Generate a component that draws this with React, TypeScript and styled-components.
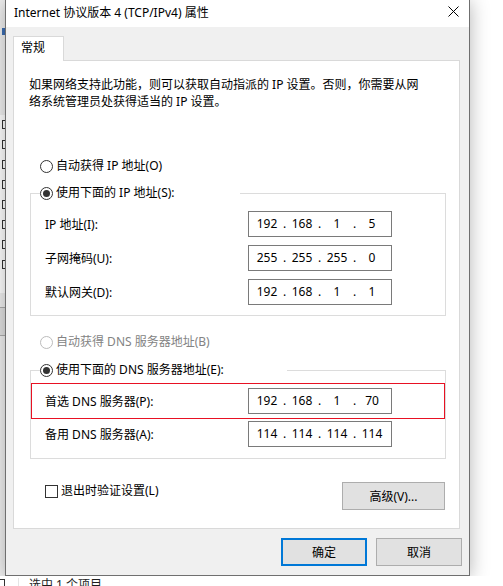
import React, { FC } from 'react';
import styled, { createGlobalStyle } from 'styled-components';

const GlobalStyle = createGlobalStyle`
  html, body {
    margin: 0;
    padding: 0;
    background: #ffffff;
  }

  body {
    font-family: "Noto Sans", "Noto Sans CJK SC", sans-serif;
    font-size: 12px;
    color: #000000;
  }
`;

const Desktop = styled.div`
  width: 503px;
  height: 586px;
  overflow: hidden;
  display: flex;
  flex-direction: column;
  background: #ffffff;
`;

const Stage = styled.div`
  flex: 0 0 576px;
  display: flex;
  align-items: flex-start;
`;

// edge of the adapter properties window underneath
const BehindWindow = styled.div`
  flex: 0 0 5px;
  height: 576px;
  display: flex;
  flex-direction: column;
  background: #f0f0f0;
`;

const BehindMark = styled.div<{ $top: number; $color?: string }>`
  margin-top: ${({ $top }) => $top}px;
  width: 3px;
  height: 7px;
  margin-left: 2px;
  background: ${({ $color }) => $color || '#4a4a4a'};
`;

const BehindList = styled.div`
  margin-top: 80px;
  height: 178px;
  background: #ffffff;
  display: flex;
  flex-direction: column;
  gap: 11px;
  padding-top: 5px;
  box-sizing: border-box;
`;

const BehindCheck = styled.div`
  width: 3px;
  height: 9px;
  margin-left: 2px;
  border: 1px solid #333333;
  border-right: none;
  box-sizing: border-box;
`;

const BehindButton = styled.div`
  margin-top: 14px;
  height: 27px;
  background: #e1e1e1;
  border-top: 1px solid #adadad;
  border-bottom: 1px solid #adadad;
`;

const Dialog = styled.div`
  flex: 0 0 465px;
  box-sizing: border-box;
  height: 577px;
  margin-top: -1px;
  display: flex;
  flex-direction: column;
  border: 1px solid #6f6f6f;
  background: #f0f0f0;
  box-shadow: 0 2px 18px rgba(0, 0, 0, 0.3);
`;

const TitleBar = styled.div`
  flex: 0 0 27px;
  display: flex;
  justify-content: space-between;
  align-items: flex-start;
  background: #ffffff;
`;

const TitleText = styled.span`
  padding: 5px 0 0 8px;
  line-height: 16px;
  white-space: nowrap;
`;

const CloseButton = styled.span`
  display: flex;
  margin: 6px 10px 0 0;
`;

const Body = styled.div`
  flex: 1;
  display: flex;
  flex-direction: column;
  padding: 9px 7px 9px 7px;
`;

const TabStrip = styled.div`
  display: flex;
  padding-left: 0;
`;

const Tab = styled.div`
  position: relative;
  z-index: 1;
  box-sizing: border-box;
  width: 51px;
  height: 25px;
  margin-bottom: -1px;
  padding: 3px 0 0 7px;
  line-height: 16px;
  background: #ffffff;
  border: 1px solid #d9d9d9;
  border-bottom: none;
`;

const Panel = styled.div`
  box-sizing: border-box;
  width: 447px;
  height: 469px;
  display: flex;
  flex-direction: column;
  padding: 15px 0 0 0;
  background: #ffffff;
  border: 1px solid #d9d9d9;
`;

const Intro = styled.p`
  margin: 0 0 0 15px;
  line-height: 17px;
  white-space: nowrap;
`;

const OptionRow = styled.label<{ $top: number; $disabled?: boolean }>`
  display: flex;
  align-items: center;
  gap: 3px;
  height: 18px;
  margin: ${({ $top }) => $top}px 0 0 26px;
  line-height: 18px;
  white-space: nowrap;
  color: ${({ $disabled }) => ($disabled ? '#838383' : '#000000')};
`;

const RadioDot = styled.span<{ $checked?: boolean; $disabled?: boolean }>`
  box-sizing: border-box;
  flex: 0 0 13px;
  width: 13px;
  height: 13px;
  display: flex;
  align-items: center;
  justify-content: center;
  border-radius: 50%;
  background: #ffffff;
  border: 1px solid ${({ $disabled }) => ($disabled ? '#bcbcbc' : '#333333')};

  &::after {
    content: "";
    width: 7px;
    height: 7px;
    border-radius: 50%;
    background: ${({ $checked }) => ($checked ? '#333333' : 'transparent')};
  }
`;

const Group = styled.fieldset<{ $top: number; $padBottom: number }>`
  min-inline-size: 0;
  margin: ${({ $top }) => $top}px 13px 0 16px;
  padding: 0 0 ${({ $padBottom }) => $padBottom}px 0;
  border: 1px solid #dcdcdc;
  display: flex;
  flex-direction: column;
`;

const GroupLegend = styled.legend<{ $width: number }>`
  box-sizing: border-box;
  width: ${({ $width }) => $width}px;
  height: 18px;
  margin-left: 9px;
  padding: 0;
  display: flex;
  align-items: center;
  gap: 3px;
  line-height: 18px;
  white-space: nowrap;
  background: #ffffff;
`;

const AddressList = styled.div`
  display: flex;
  flex-direction: column;
  gap: 8px;
  padding-top: 9px;
`;

const AddressRow = styled.div<{ $marked?: boolean }>`
  display: flex;
  align-items: center;
  box-sizing: border-box;
  height: ${({ $marked }) => ($marked ? 36 : 26)}px;
  padding: 0 ${({ $marked }) => ($marked ? 13 : 14)}px;
  border: ${({ $marked }) => ($marked ? '1px solid #e81123' : 'none')};
`;

const AddressLabel = styled.span`
  flex: 0 0 203px;
  white-space: nowrap;
`;

const IpBox = styled.div`
  display: grid;
  grid-template-columns: 28px 7px 28px 7px 28px 7px 28px;
  align-items: center;
  box-sizing: border-box;
  width: 144px;
  height: 26px;
  padding-left: 4px;
  border: 1px solid #7a7a7a;
  background: #ffffff;
  line-height: 16px;
`;

const Octet = styled.span`
  text-align: center;
`;

const DnsList = styled.div`
  display: flex;
  flex-direction: column;
  gap: 2px;
  padding-top: 4px;
`;

const ActionRow = styled.div`
  display: flex;
  justify-content: space-between;
  align-items: flex-start;
  margin-top: 23px;
  padding: 0 14px 0 31px;
`;

const CheckLabel = styled.label`
  display: flex;
  align-items: center;
  gap: 3px;
  margin-top: 0;
  height: 18px;
  line-height: 18px;
  white-space: nowrap;
`;

const CheckBox = styled.span`
  box-sizing: border-box;
  width: 13px;
  height: 13px;
  border: 1px solid #333333;
  background: #ffffff;
`;

const Button = styled.button<{ $width: number; $primary?: boolean }>`
  box-sizing: border-box;
  width: ${({ $width }) => $width}px;
  height: 28px;
  padding: 0;
  font: inherit;
  color: #000000;
  background: #e1e1e1;
  border: ${({ $primary }) => ($primary ? '2px solid #0078d7' : '1px solid #adadad')};
  border-radius: 0;
`;

const Footer = styled.div`
  display: flex;
  justify-content: flex-end;
  gap: 9px;
  margin-top: 9px;
  padding-right: 0;
`;

const StatusBar = styled.div`
  flex: 0 0 10px;
  display: flex;
  align-items: flex-start;
  overflow: hidden;
  background: #ffffff;
`;

const StatusStub = styled.span`
  width: 5px;
  height: 8px;
  margin-top: 3px;
  border: 1px solid #333333;
  border-left: none;
  box-sizing: border-box;
`;

const StatusDivider = styled.span`
  width: 1px;
  height: 10px;
  margin: 2px 10px 0 13px;
  background: #e5e5e5;
`;

const StatusText = styled.span`
  padding-top: 1px;
  line-height: 16px;
  color: #1e1e1e;
  white-space: nowrap;
`;

type IpFieldProps = {
  value: string;
};

const IpField: FC<IpFieldProps> = ({ value }) => {
  const parts = value.split('.');
  return (
    <IpBox>
      {parts.map((part, i) => (
        <React.Fragment key={i}>
          <Octet>{part}</Octet>
          {i < parts.length - 1 && <Octet>.</Octet>}
        </React.Fragment>
      ))}
    </IpBox>
  );
};

const CloseIcon: FC = () => (
  <svg width="11" height="11" viewBox="0 0 11 11">
    <path d="M0.5 0.5 L10.5 10.5 M10.5 0.5 L0.5 10.5" stroke="#000000" strokeWidth="1" fill="none" />
  </svg>
);

const App: FC = () => (
  <>
    <GlobalStyle />
    <Desktop>
      <Stage>
        <BehindWindow>
          <BehindMark $top={28} $color="#3c6eb4" />
          <BehindList>
            {Array.from({ length: 8 }).map((_, i) => (
              <BehindCheck key={i} />
            ))}
          </BehindList>
          <BehindButton />
        </BehindWindow>

        <Dialog>
          <TitleBar>
            <TitleText>Internet 协议版本 4 (TCP/IPv4) 属性</TitleText>
            <CloseButton>
              <CloseIcon />
            </CloseButton>
          </TitleBar>

          <Body>
            <TabStrip>
              <Tab>常规</Tab>
            </TabStrip>

            <Panel>
              <Intro>
                如果网络支持此功能，则可以获取自动指派的 IP 设置。否则，你需要从网
                <br />
                络系统管理员处获得适当的 IP 设置。
              </Intro>

              <OptionRow $top={47}>
                <RadioDot />
                自动获得 IP 地址(O)
              </OptionRow>

              <Group $top={9} $padBottom={10}>
                <GroupLegend $width={200}>
                  <RadioDot $checked />
                  使用下面的 IP 地址(S):
                </GroupLegend>
                <AddressList>
                  <AddressRow>
                    <AddressLabel>IP 地址(I):</AddressLabel>
                    <IpField value="192.168.1.5" />
                  </AddressRow>
                  <AddressRow>
                    <AddressLabel>子网掩码(U):</AddressLabel>
                    <IpField value="255.255.255.0" />
                  </AddressRow>
                  <AddressRow>
                    <AddressLabel>默认网关(D):</AddressLabel>
                    <IpField value="192.168.1.1" />
                  </AddressRow>
                </AddressList>
              </Group>

              <OptionRow $top={17} $disabled>
                <RadioDot $disabled />
                自动获得 DNS 服务器地址(B)
              </OptionRow>

              <Group $top={10} $padBottom={11}>
                <GroupLegend $width={247}>
                  <RadioDot $checked />
                  使用下面的 DNS 服务器地址(E):
                </GroupLegend>
                <DnsList>
                  <AddressRow $marked>
                    <AddressLabel>首选 DNS 服务器(P):</AddressLabel>
                    <IpField value="192.168.1.70" />
                  </AddressRow>
                  <AddressRow>
                    <AddressLabel>备用 DNS 服务器(A):</AddressLabel>
                    <IpField value="114.114.114.114" />
                  </AddressRow>
                </DnsList>
              </Group>

              <ActionRow>
                <CheckLabel>
                  <CheckBox />
                  退出时验证设置(L)
                </CheckLabel>
                <Button $width={103}>高级(V)...</Button>
              </ActionRow>
            </Panel>

            <Footer>
              <Button $width={86} $primary>确定</Button>
              <Button $width={86}>取消</Button>
            </Footer>
          </Body>
        </Dialog>
      </Stage>

      <StatusBar>
        <StatusStub />
        <StatusDivider />
        <StatusText>选中 1 个项目</StatusText>
      </StatusBar>
    </Desktop>
  </>
);

export default App;
